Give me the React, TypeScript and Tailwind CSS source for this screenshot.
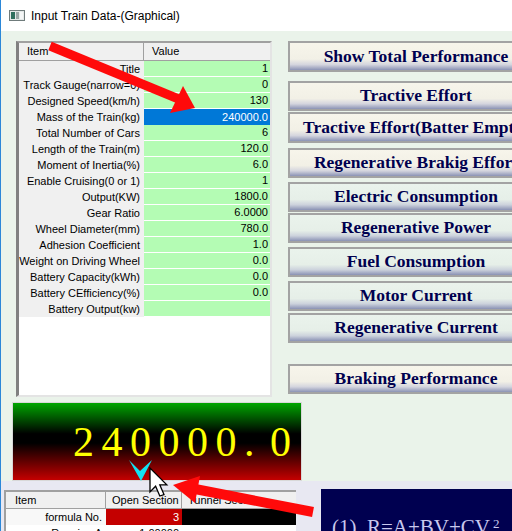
const rows: [string, string][] = [
  ['Title', '1'],
  ['Track Gauge(narrow=0)', '0'],
  ['Designed Speed(km/h)', '130'],
  ['Mass of the Train(kg)', '240000.0'],
  ['Total Number of Cars', '6'],
  ['Length of the Train(m)', '120.0'],
  ['Moment of Inertia(%)', '6.0'],
  ['Enable Cruising(0 or 1)', '1'],
  ['Output(KW)', '1800.0'],
  ['Gear Ratio', '6.0000'],
  ['Wheel Diameter(mm)', '780.0'],
  ['Adhesion Coefficient', '1.0'],
  ['Weight on Driving Wheel', '0.0'],
  ['Battery Capacity(kWh)', '0.0'],
  ['Battery CEfficiency(%)', '0.0'],
  ['Battery Output(kw)', ''],
]

const cream =
  'bg-[linear-gradient(to_bottom,#f7f5eb_0%,#f2f0e6_60%,#d4d5de_80%,#8b93b5_100%)]'
const mint =
  'bg-[linear-gradient(to_bottom,#eaf3ec_0%,#e6efe8_60%,#ccd2dc_80%,#8a92b4_100%)]'

const buttons = [
  { label: 'Show Total Performance', cls: `mt-0 h-[31px] ${cream}` },
  { label: 'Tractive Effort', cls: `mt-[9px] h-[30px] ${cream}` },
  { label: 'Tractive Effort(Batter Empty)', cls: `mt-[1px] h-[31px] ${cream}` },
  { label: 'Regenerative Brakig Effort', cls: `mt-[5px] h-[30px] ${cream}` },
  { label: 'Electric Consumption', cls: `mt-[4px] h-[30px] ${mint}` },
  { label: 'Regenerative Power', cls: `mt-[1px] h-[30px] ${mint}` },
  { label: 'Fuel Consumption', cls: `mt-[4px] h-[30px] ${mint}` },
  { label: 'Motor Current', cls: `mt-[4px] h-[30px] ${mint}` },
  { label: 'Regenerative Current', cls: `mt-[2px] h-[30px] ${mint}` },
  { label: 'Braking Performance', cls: `mt-[21px] h-[30px] ${cream}` },
]

function WindowIcon() {
  return (
    <svg width="16" height="11" viewBox="0 0 16 11">
      <rect x="0.5" y="0.5" width="15" height="10" fill="#e4e8e8" stroke="#6f7b7b" />
      <rect x="2" y="2" width="4" height="7" fill="#2f6e5e" />
      <rect x="7" y="2" width="3" height="7" fill="#9aa6a6" />
      <rect x="11" y="2" width="3" height="7" fill="#f4f6f6" />
    </svg>
  )
}

function TrainGrid() {
  return (
    <div className="ml-[15px] mt-[10px] w-[256px] h-[356px] shrink-0 bg-white border-l-[3px] border-t-2 border-r-2 border-b-2 border-l-[#808080] border-t-[#a0a0a0] border-r-[#e4e4e4] border-b-[#e4e4e4]">
      {/* Header */}
      <div className="flex h-[18px] bg-[#f0f0f0] border-b border-[#a0a0a0]">
        <div className="w-[125px] pl-[8px] flex items-center border-r border-[#a0a0a0]">Item</div>
        <div className="flex-1 pl-[8px] flex items-center">Value</div>
      </div>
      {rows.map(([item, value], i) => (
        <div key={i} className="flex h-[16px]">
          <div className="w-[125px] pr-[4px] bg-[#f0f0f0] flex items-center justify-end whitespace-nowrap">
            {item}
          </div>
          <div
            className={
              i === 3
                ? 'flex-1 pr-[2px] bg-[#0078d7] text-white flex items-center justify-end'
                : 'flex-1 pr-[2px] bg-[#b4fcb4] border-b border-white flex items-center justify-end'
            }
          >
            {value}
          </div>
        </div>
      ))}
    </div>
  )
}

function ButtonColumn() {
  return (
    <div className="ml-[16px] mt-[10px] w-[256px] shrink-0 flex flex-col font-['Liberation_Serif',serif]">
      {buttons.map((b) => (
        <div
          key={b.label}
          className={`${b.cls} flex items-center justify-center border-2 border-[#a3a3a3] text-[17.5px] font-bold leading-none text-[#00004f] whitespace-nowrap`}
        >
          {b.label}
        </div>
      ))}
    </div>
  )
}

function Overlay() {
  return (
    <svg className="absolute left-0 top-0 pointer-events-none" width="512" height="531" viewBox="0 0 512 531">
      {/* red arrow to mass row */}
      <line x1="49" y1="46" x2="180" y2="100" stroke="#ff0a0a" strokeWidth="9" />
      <polygon points="194,108 182,86 169,113" fill="#ff0a0a" />
      {/* red arrow to slider */}
      <line x1="312" y1="512" x2="194" y2="489" stroke="#ff0a0a" strokeWidth="10" />
      <polygon points="172,485 199,476 194,503" fill="#ff0a0a" />
      {/* slider marker */}
      <polygon points="128,460 139,471 151,460 140,481" fill="#12e2f2" />
      {/* mouse cursor */}
      <polygon
        points="149,468 149,492 154.6,486.2 158.8,496 163,494.6 158.8,484.8 165.8,484.8"
        fill="#ffffff"
        stroke="#000000"
        strokeWidth="1.3"
        strokeLinejoin="miter"
      />
    </svg>
  )
}

export default function App() {
  return (
    <div className="relative w-[512px] h-[531px] overflow-hidden border-l border-[#2b87d8] bg-white text-[11px] text-black font-['Liberation_Sans',Arial,sans-serif]">
      {/* Title bar */}
      <div className="h-[31px] flex items-center bg-white">
        <div className="ml-[8px] flex items-center">
          <WindowIcon />
        </div>
        <span className="ml-[6px] text-[12px]">Input Train Data-(Graphical)</span>
      </div>

      {/* Main area */}
      <div className="h-[450px] bg-[#eaf3ea]">
        <div className="flex">
          <TrainGrid />
          <ButtonColumn />
        </div>
        <div className="ml-[11px] mt-[5px] w-[290px] h-[79px] border border-[#d8d8d8] bg-[linear-gradient(to_bottom,#00a600_0%,#000000_40%,#000000_52%,#c40000_100%)]">
          <div className="pl-[60px] pt-[18px] text-[42px] leading-none tracking-[7.5px] text-[#ffff00] font-['Liberation_Serif',serif] whitespace-nowrap">
            240000.<span className="ml-[8px]">0</span>
          </div>
        </div>
      </div>

      {/* Bottom area */}
      <div className="h-[50px] bg-[#e8e8f2] flex items-start">
        <div className="ml-[3px] mt-[9px] w-[292px] shrink-0 border-t-2 border-l-2 border-[#a0a0a0] bg-white">
          <div className="flex h-[17px] bg-[#f0f0f0] border-b border-[#a0a0a0]">
            <div className="w-[100px] pl-[9px] flex items-center border-r border-[#a0a0a0]">Item</div>
            <div className="w-[76px] pl-[6px] flex items-center border-r border-[#a0a0a0]">Open Section</div>
            <div className="flex-1 pl-[6px] flex items-center">Tunnel Section</div>
          </div>
          <div className="flex h-[16px]">
            <div className="w-[100px] pr-[4px] bg-[#f8f8f8] flex items-center justify-end">formula No.</div>
            <div className="w-[76px] pr-[3px] bg-[#c40000] text-white flex items-center justify-end">3</div>
            <div className="flex-1 bg-black" />
          </div>
          <div className="flex h-[16px]">
            <div className="w-[100px] pr-[4px] flex items-center justify-end">Running A</div>
            <div className="w-[76px] pr-[3px] flex items-center justify-end">1.00000</div>
            <div className="flex-1" />
          </div>
        </div>
        <div className="ml-[25px] mt-[8px] flex-1 h-[60px] bg-[#000050] pl-[11px] pt-[28px] text-[21px] leading-none text-[#c9c9ee] font-['Liberation_Serif',serif] whitespace-nowrap">
          (1)&nbsp;&nbsp;R=A+BV+CV<sup className="ml-[3px] text-[13px]">2</sup>
        </div>
      </div>

      <Overlay />
    </div>
  )
}
